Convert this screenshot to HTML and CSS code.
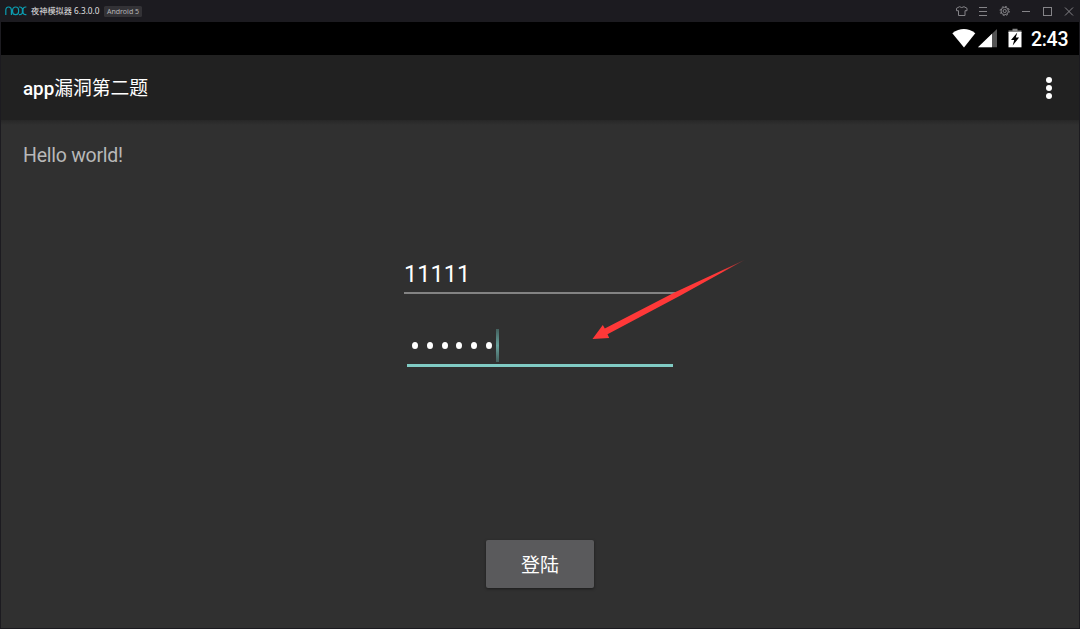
FILE: index.html
```html
<!DOCTYPE html>
<html lang="zh-CN">
<head>
<meta charset="utf-8">
<title>夜神模拟器</title>
<link rel="stylesheet" href="styles.css">
</head>
<body>
<div class="window">
  <header class="titlebar">
    <svg class="logo" width="22" height="10" viewBox="0 0 22 10" fill="none" stroke="#0b9cb0" stroke-width="1.2">
      <path d="M.8 9V4.200Q.8 1 3.600 1t2.800 3.200V9"/>
      <rect x="7.600" y="1" width="6" height="7.700" rx="3"/>
      <path d="M14 1h.8Q17 1 17.400 3.200v3.300Q17 8.700 14.600 8.700H14M21.400 1h-.8Q18.400 1 18 3.200v3.300Q18.400 8.700 20.600 8.700h.8"/>
    </svg>
    <span class="product">夜神模拟器 6.3.0.0</span>
    <span class="tag">Android 5</span>
    <svg class="controls" width="120" height="12" viewBox="0 0 120 12" fill="none" stroke="#858488" stroke-width="1">
      <path d="M4.500 1.700 1.500 3.300v2.400H3.500v4.800h6.500V5.700h2V3.300L9 1.700Q6.700 3.400 4.500 1.700z"/>
      <path d="M24 2.500h8M24 6.500h8M24 10.500h8"/>
      <circle cx="49.700" cy="6" r="3.700"/><circle cx="49.700" cy="6" r="1.600"/>
      <circle cx="49.700" cy="6" r="4.600" stroke-dasharray="1.800 1.810"/>
      <path d="M67 6.500h8"/>
      <rect x="88.500" y="2.500" width="8" height="8"/>
      <path d="m110 2.500 8 8M118 2.500l-8 8"/>
    </svg>
  </header>
  <main class="screen">
    <div class="status">
      <svg width="72" height="22" viewBox="0 0 72 22" fill="#fff">
        <path d="M.3 5.200Q12 -3 23.300 5.200L12 19.600z"/>
        <path fill="#555" d="M45 1v18.300H26z"/>
        <path d="M40 5.800v13.500H26z"/>
        <path fill="#888" d="M60.500.8h5v1.700h4V5h-13V2.500h4z"/>
        <path d="M56.500 4h13v15.300h-13z"/>
        <path fill="#000" d="M65.300 4.600 59 12h3.200l-1.500 5.400 6.400-7.800h-3.300z"/>
      </svg>
      <span class="clock">2:43</span>
    </div>
    <div class="appbar">
      <h1 class="title">app<span class="cjk">漏洞第二题</span></h1>
      <div class="more"><i></i><i></i><i></i></div>
    </div>
    <div class="content">
      <p class="hello">Hello world!</p>
      <form class="login">
        <div class="field">11111</div>
        <div class="field password">
          <span class="dots"><i></i><i></i><i></i><i></i><i></i><i></i></span>
          <span class="caret"></span>
        </div>
        <button class="submit" type="button">登陆</button>
      </form>
    </div>
  </main>
  <svg class="arrow" width="154" height="82" viewBox="592 259 154 82">
    <defs>
      <linearGradient id="fade" x1="0" x2="1">
        <stop offset=".85" stop-color="#ff3838"/>
        <stop offset="1" stop-color="#ff3838" stop-opacity=".3"/>
      </linearGradient>
    </defs>
    <path fill="url(#fade)" d="M592.500 339 602.800 325l2 3.600L675 292.300 745 259.800 680 295.800 607.500 334.300l1.700 3.700z"/>
  </svg>
</div>
</body>
</html>
```

FILE: styles.css
```css
* { box-sizing: border-box; }

body {
  margin: 0;
  background: #1c1b20;
  font-family: Roboto, "Noto Sans CJK SC", sans-serif;
  color: #fff;
}

.window {
  position: relative;
  display: flex;
  flex-direction: column;
  width: 1080px;
  height: 629px;
  padding: 0 1px 1px;
  overflow: hidden;
  background: #1c1b20;
}

.titlebar {
  display: flex;
  align-items: center;
  height: 22px;
  padding: 0 4px;
}

.product {
  width: 69px;
  margin-left: 4px;
  font: 8.200px/12px "Noto Sans", "Noto Sans CJK SC", sans-serif;
  color: #e0e0e1;
  white-space: nowrap;
}

.tag {
  margin-left: 4px;
  width: 38px;
  height: 11px;
  border-radius: 1.500px;
  background: #333236;
  font: 7px/11px "Noto Sans", sans-serif;
  text-align: center;
  white-space: nowrap;
  color: #b5b5b7;
}

.controls { margin-left: auto; }

.screen {
  display: flex;
  flex: 1;
  flex-direction: column;
  background: #303030;
}

.status {
  display: flex;
  justify-content: flex-end;
  height: 33px;
  padding: 6px 12px 0 0;
  background: #000;
}

.clock {
  width: 36px;
  margin-left: 7px;
  font: 500 19.500px/23px Roboto, sans-serif;
  letter-spacing: -.3px;
}

.appbar {
  display: flex;
  align-items: center;
  justify-content: space-between;
  height: 65px;
  padding: 0 27px 0 22px;
  background: #212121;
}

.title {
  margin: 2px 0 0;
  font-size: 18.800px;
  font-weight: 500;
  line-height: 26px;
}

.cjk { font-weight: 400; }

.more {
  display: flex;
  flex-direction: column;
  gap: 2px;
}

.more i {
  width: 6px;
  height: 6px;
  border-radius: 50%;
  background: #fff;
}

.content {
  flex: 1;
  padding: 23px 22px 0;
  background: linear-gradient(#272727, #303030 5px);
}

.hello {
  margin: 0;
  font-size: 19.500px;
  line-height: 25px;
  letter-spacing: -.25px;
  color: #b8b8b8;
}

.login {
  display: flex;
  flex-direction: column;
  align-items: center;
  padding-top: 85px;
}

.field {
  width: 272px;
  height: 41px;
  border-bottom: 2px solid #838383;
  font-size: 23.600px;
  line-height: 42px;
}

.password {
  display: flex;
  align-items: center;
  width: 266px;
  height: 40px;
  margin-top: 33px;
  padding: 0 0 0 5px;
  border-bottom: 3px solid #80cbc4;
}

.dots {
  display: flex;
  gap: 8.800px;
}

.dots i {
  width: 6px;
  height: 7px;
  border-radius: 50%;
  background: #fff;
}

.caret {
  width: 3px;
  height: 33px;
  margin-left: 4px;
  background: linear-gradient(#43605d, #67a09b 50%, #43605d);
}

.submit {
  width: 108px;
  height: 48px;
  margin-top: 173px;
  padding: 0;
  border: 0;
  border-radius: 2px;
  background: #5a5a5c;
  box-shadow: 0 1px 3px rgba(0, 0, 0, .45);
  color: #fff;
  font: 400 19px/48px "Noto Sans CJK SC", sans-serif;
}

.arrow {
  position: absolute;
  top: 259px;
  left: 592px;
}
```
